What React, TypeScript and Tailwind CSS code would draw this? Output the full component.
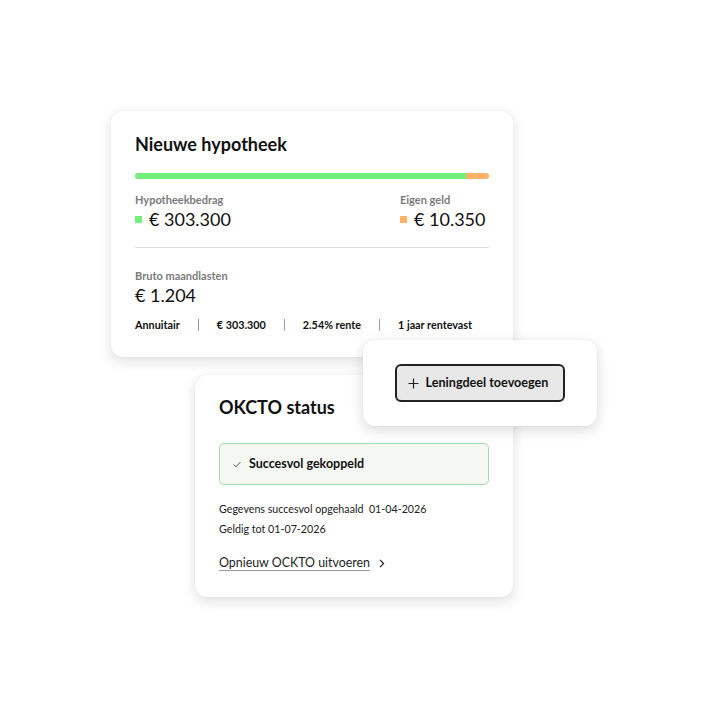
import React from "react";

const font = { fontFamily: "Lato, 'Noto Sans', sans-serif" };

function Sep() {
  return <span className="block h-[12px] w-px bg-[#9a9a9a]" />;
}

export default function App() {
  return (
    <div className="relative h-[708px] w-[708px] overflow-hidden bg-white text-[#111]" style={font}>
      {/* Card 1 */}
      <div className="absolute left-[111px] top-[111px] w-[402px] h-[246px] rounded-[12px] bg-white px-[24px] pt-[21px] shadow-[0_4px_14px_rgba(0,0,0,0.13),0_0_2px_rgba(0,0,0,0.06)]">
        <div className="text-[18px] leading-[25px] font-bold">Nieuwe hypotheek</div>
        <div className="mt-[16px] flex h-[6px] w-full overflow-hidden rounded-full">
          <div className="h-full w-[331px] bg-[#72ee7c]" />
          <div className="h-full flex-1 bg-[#ffb168]" />
        </div>
        <div className="mt-[13px] flex">
          <div className="w-[265px]">
            <div className="text-[11px] leading-[16px] font-bold text-[#7b7b7b]">Hypotheekbedrag</div>
            <div className="flex items-center text-[18px] leading-[22px]">
              <span className="mr-[7px] block h-[7px] w-[7px] bg-[#72ee7c]" />
              € 303.300
            </div>
          </div>
          <div>
            <div className="text-[11px] leading-[16px] font-bold text-[#7b7b7b]">Eigen geld</div>
            <div className="flex items-center text-[18px] leading-[22px]">
              <span className="mr-[7px] block h-[7px] w-[7px] bg-[#ffb168]" />
              € 10.350
            </div>
          </div>
        </div>
        <div className="mt-[17px] h-px w-full bg-[#dedede]" />
        <div className="mt-[20px] text-[11px] leading-[16px] font-bold text-[#7b7b7b]">Bruto maandlasten</div>
        <div className="text-[18px] leading-[22px]">€ 1.204</div>
        <div className="mt-[11px] flex items-center gap-[18px] text-[10.8px] leading-[16px] font-bold">
          <span>Annuitair</span>
          <Sep />
          <span>€ 303.300</span>
          <Sep />
          <span>2.54% rente</span>
          <Sep />
          <span>1 jaar rentevast</span>
        </div>
      </div>

      {/* Card 2 */}
      <div className="absolute left-[195px] top-[375px] w-[318px] h-[222px] rounded-[12px] bg-white px-[24px] pt-[20px] shadow-[0_4px_14px_rgba(0,0,0,0.13),0_0_2px_rgba(0,0,0,0.06)]">
        <div className="text-[18px] leading-[25px] font-bold">OKCTO status</div>
        <div className="mt-[23px] flex h-[42px] items-center rounded-[5px] border border-[#a4d9b3] bg-[#f5f7f2] pl-[13px]">
          <svg width="8" height="7" viewBox="0 0 8 7" className="mr-[8px]">
            <path d="M0.7 3.6 L2.9 5.8 L7.3 1.2" fill="none" stroke="#333" strokeWidth="0.9" />
          </svg>
          <span className="text-[12.5px] font-bold">Succesvol gekoppeld</span>
        </div>
        <div className="mt-[14px] text-[10.7px] leading-[20px] text-[#222]">
          <div>Gegevens succesvol opgehaald&nbsp;&nbsp;01-04-2026</div>
          <div>Geldig tot 01-07-2026</div>
        </div>
        <div className="mt-[15px] flex items-center text-[12.4px] leading-[18px] text-[#222]">
          <span className="underline decoration-[#9a9a9a] underline-offset-[3px]">Opnieuw OCKTO uitvoeren</span>
          <svg width="6" height="9" viewBox="0 0 6 9" className="ml-[9px]">
            <path d="M1 0.8 L4.6 4.5 L1 8.2" fill="none" stroke="#222" strokeWidth="1.2" />
          </svg>
        </div>
      </div>

      {/* Card 3 */}
      <div className="absolute left-[363px] top-[340px] flex w-[234px] h-[86px] items-center justify-center rounded-[12px] bg-white shadow-[0_4px_14px_rgba(0,0,0,0.15),0_0_2px_rgba(0,0,0,0.06)]">
        <button className="flex h-[38px] w-[170px] items-center justify-center rounded-[6px] border-2 border-[#222] bg-[#e8e8e8] pr-[4px] text-[12.6px] font-bold text-[#111]" style={font}>
          <svg width="11" height="11" viewBox="0 0 11 11" className="mr-[7px]">
            <path d="M5.5 0.5 V10.5 M0.5 5.5 H10.5" stroke="#222" strokeWidth="1.2" />
          </svg>
          Leningdeel toevoegen
        </button>
      </div>
    </div>
  );
}
